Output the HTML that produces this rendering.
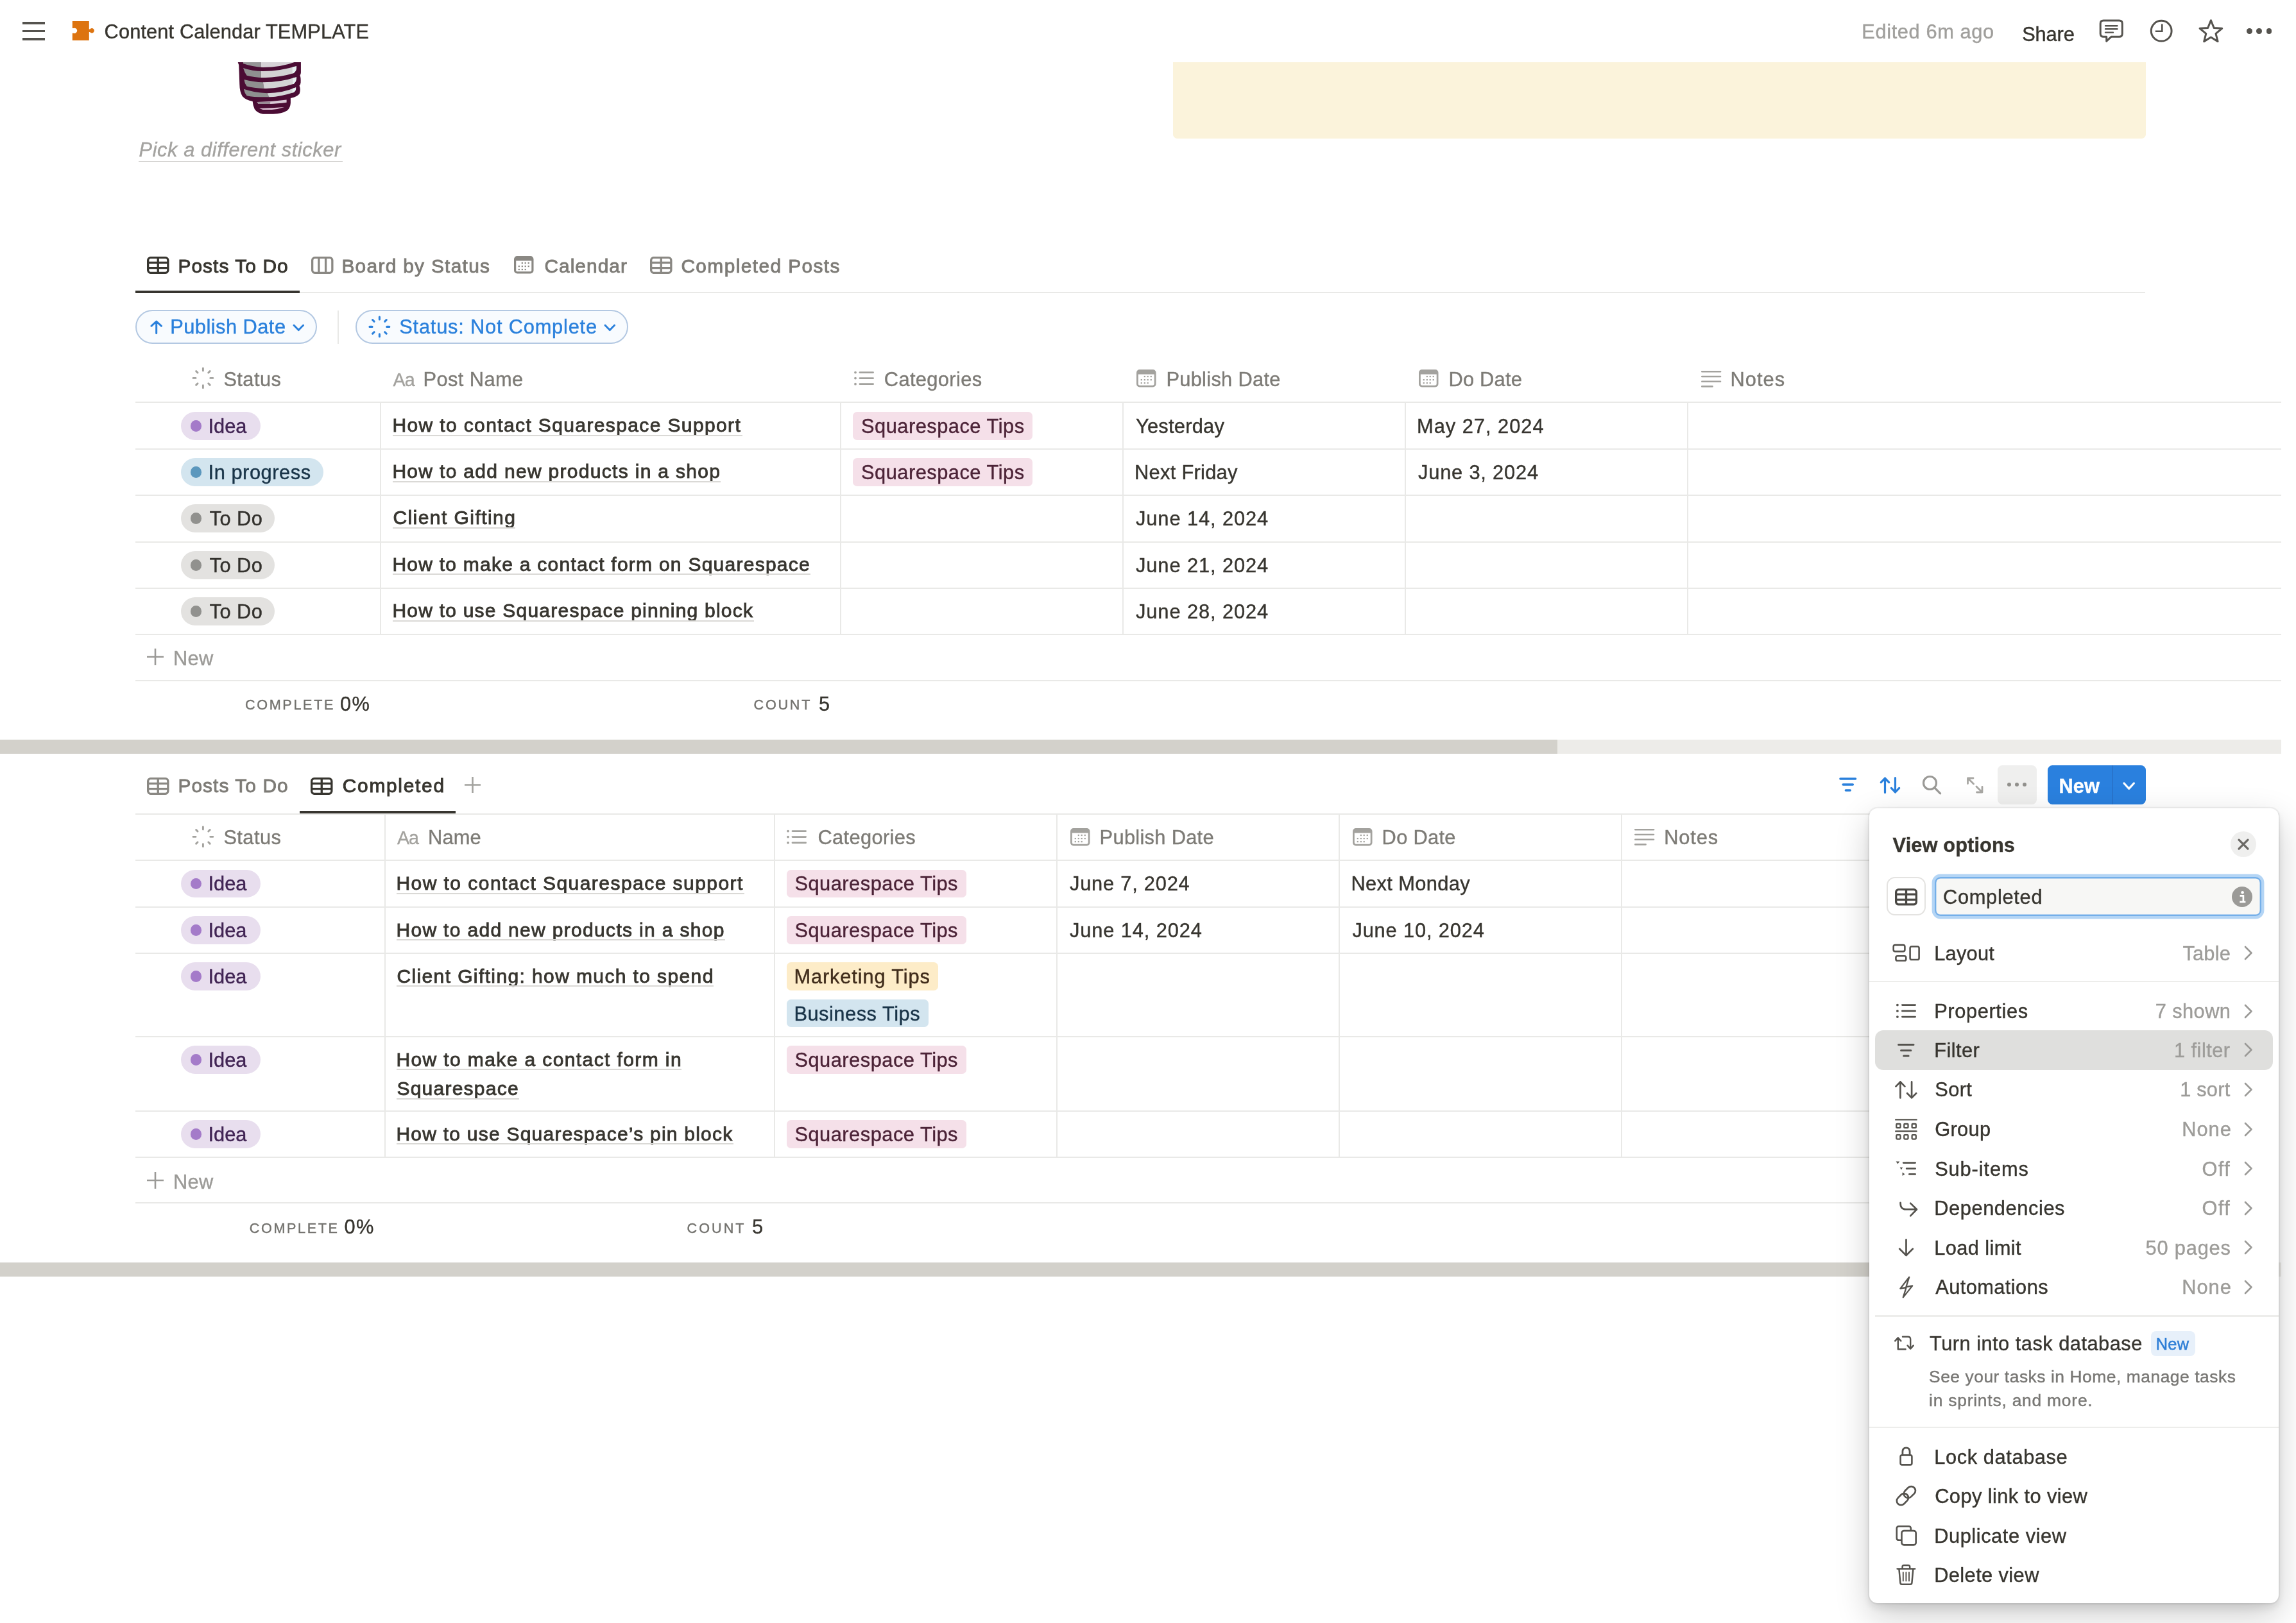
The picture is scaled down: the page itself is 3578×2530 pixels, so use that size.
<!DOCTYPE html>
<html><head><meta charset="utf-8"><title>Content Calendar TEMPLATE</title>
<style>
html,body{margin:0;padding:0;background:#fff;}
body{width:3578px;height:2530px;position:relative;overflow:hidden;font-family:"Liberation Sans",sans-serif;}
#r{position:absolute;left:0;top:0;width:3578px;height:2530px;will-change:transform;}
#r>div,#r>span,#r>svg{position:absolute;}
.t{white-space:pre;line-height:1;display:block;}
svg{overflow:visible;display:block;}
</style></head>
<body><div id="r">
<div style="left:35px;top:34.2px;width:35px;height:3.7px;background:#55534e;"></div>
<div style="left:35px;top:46.8px;width:35px;height:3.7px;background:#55534e;"></div>
<div style="left:35px;top:59.3px;width:35px;height:3.7px;background:#55534e;"></div>
<svg style="left:110px;top:30px;width:40px;height:36px;" viewBox="110 30 40 36"><path fill="#dd7410" d="M112.8 33H138.8V45.6H140.2A3.7 3.7 0 1 1 140.2 50H138.8V63H112.8V51.8H115A4.1 4.1 0 1 0 115 43.9H112.8Z"/></svg>
<span class="t" style="left:162.60px;top:34.93px;font-size:30.8px;color:#37352f;letter-spacing:0.112px;-webkit-text-stroke:0.4px #37352f;">Content Calendar TEMPLATE</span>
<span class="t" style="left:2901.30px;top:34.53px;font-size:30.8px;color:#a09f9c;letter-spacing:0.608px;-webkit-text-stroke:0.4px #a09f9c;">Edited 6m ago</span>
<span class="t" style="left:3151.20px;top:38.93px;font-size:30.8px;color:#37352f;letter-spacing:-0.150px;-webkit-text-stroke:0.4px #37352f;">Share</span>
<svg style="left:3268px;top:27px;width:46px;height:44px;" viewBox="3268 27 46 44"><path d="M3278 32.1H3302.5Q3307.3 32.1 3307.3 36.9V52.5Q3307.3 57.3 3302.5 57.3H3290L3282.7 64.2V57.3H3278Q3273.2 57.3 3273.2 52.5V36.9Q3273.2 32.1 3278 32.1Z" fill="none" stroke="#55534e" stroke-width="3" stroke-linejoin="round"/><path d="M3281 40.2H3299.5M3281 45.2H3299.5M3281 50.6H3293" stroke="#55534e" stroke-width="2.4" stroke-linecap="round"/></svg>
<svg style="left:3346px;top:26px;width:46px;height:46px;" viewBox="3346 26 46 46"><circle cx="3368.2" cy="48.2" r="15.9" fill="none" stroke="#55534e" stroke-width="3"/><path d="M3369.3 37.5V48.8H3358.8" fill="none" stroke="#55534e" stroke-width="2.6"/></svg>
<svg style="left:3422px;top:26px;width:48px;height:46px;" viewBox="3422 26 48 46"><polygon points="3445.40,31.70 3450.10,43.43 3462.71,44.28 3453.01,52.37 3456.10,64.62 3445.40,57.90 3434.70,64.62 3437.79,52.37 3428.09,44.28 3440.70,43.43" fill="none" stroke="#55534e" stroke-width="3" stroke-linejoin="round"/></svg>
<div style="left:3501.2px;top:44px;width:8.8px;height:8.8px;background:#55534e;border-radius:50%;"></div>
<div style="left:3516.4px;top:44px;width:8.8px;height:8.8px;background:#55534e;border-radius:50%;"></div>
<div style="left:3531.6px;top:44px;width:8.8px;height:8.8px;background:#55534e;border-radius:50%;"></div>
<svg style="left:340px;top:90px;width:160px;height:100px;" viewBox="0 0 2296 1435">
<path fill="#4b0c34" d="M440 100H1850V330Q1850 360 1830 400Q1850 440 1845 560Q1840 600 1815 625Q1850 700 1820 800Q1780 870 1620 905V1010Q1615 1120 1540 1185Q1420 1255 1230 1258H1000Q880 1240 815 1150Q775 1060 770 975Q620 950 540 860Q480 760 478 600Q470 350 462 160Z"/>
<clipPath id="c1"><path d="M555 100H1705Q1400 215 1000 215Q760 200 555 128Z"/></clipPath>
<g clip-path="url(#c1)"><rect x="500" y="90" width="455" height="200" fill="#959596"/><rect x="955" y="90" width="800" height="200" fill="#d6d2d6"/></g>
<clipPath id="c2"><path d="M560 228Q760 300 1000 300Q1400 300 1752 185Q1765 290 1690 345Q1400 440 1000 447Q800 440 640 400Q590 330 560 228Z"/></clipPath>
<g clip-path="url(#c2)"><rect x="500" y="150" width="460" height="320" fill="#8f9090"/><rect x="960" y="150" width="740" height="320" fill="#d3d2d3"/><rect x="1660" y="150" width="120" height="320" fill="#e6eff0"/></g>
<clipPath id="c3"><path d="M578 488Q800 545 1000 550Q1400 550 1752 430Q1760 530 1690 585Q1400 680 1040 690Q800 680 640 640Q590 570 578 488Z"/></clipPath>
<g clip-path="url(#c3)"><path d="M500 400H980L1030 720H500Z" fill="#8f9090"/><path d="M980 400H1700V720H1030Z" fill="#d3d4d5"/><rect x="1670" y="400" width="120" height="320" fill="#e6eff0"/></g>
<clipPath id="c4"><path d="M570 700Q800 780 1100 792Q1450 790 1742 660Q1750 740 1690 775Q1400 870 1150 882Q800 890 640 850Q590 790 570 700Z"/></clipPath>
<g clip-path="url(#c4)"><path d="M500 640H1020L1150 900H500Z" fill="#8f9090"/><path d="M1020 640H1700V900H1150Z" fill="#d3d5d6"/><rect x="1660" y="640" width="120" height="260" fill="#e6f1f2"/></g>
<path d="M868 990Q1200 985 1530 940V1000Q1300 1030 1170 1032H900Z" fill="#d9c9d6"/>
<path d="M868 990Q1000 990 1165 985V1032H900Z" fill="#9a8a96"/>
<path d="M920 1132Q1200 1130 1480 1105Q1350 1150 1200 1162H1000Z" fill="#e0c4d8"/>
</svg>
<span class="t" style="left:216.50px;top:219.13px;font-size:30.8px;color:#a4a3a0;letter-spacing:0.587px;font-style:italic;-webkit-text-stroke:0.4px #a4a3a0;">Pick a different sticker</span>
<div style="left:216px;top:250.5px;width:317.5px;height:1.6px;background:#c9c8c5;"></div>
<div style="left:1828px;top:97px;width:1516px;height:118.8px;background:#fbf3db;border-radius:0 0 6.6px 6.6px;"></div>
<div style="left:211px;top:455px;width:3132px;height:2px;background:#e9e9e7;"></div>
<div style="left:211px;top:453px;width:256px;height:4px;background:#37352f;"></div>
<svg style="left:229.3px;top:400.3px;width:34.5px;height:27px;" viewBox="0 0 34.5 27"><g fill="none" stroke="#37352f" stroke-width="3.3"><rect x="1.65" y="1.65" width="31.2" height="23.7" rx="4"/><path d="M17.25 1.65V25.35M1.65 9.3H32.85M1.65 17.7H32.85"/></g></svg>
<span class="t" style="left:277.40px;top:399.71px;font-size:29.876px;color:#37352f;letter-spacing:1.080px;-webkit-text-stroke:0.95px #37352f;">Posts To Do</span>
<svg style="left:484.5px;top:399.8px;width:34.5px;height:27px;" viewBox="0 0 34.5 27"><g fill="none" stroke="#8a8883" stroke-width="3.3"><rect x="1.65" y="1.65" width="31.2" height="23.7" rx="4"/><path d="M11.9 1.65V25.35M22.6 1.65V25.35"/></g></svg>
<span class="t" style="left:532.40px;top:399.71px;font-size:29.876px;color:#7d7b76;letter-spacing:1.300px;-webkit-text-stroke:0.85px #7d7b76;">Board by Status</span>
<svg style="left:801.4px;top:399.3px;width:30.5px;height:27.5px;" viewBox="0 0 30.5 27.5"><rect x="1.6" y="1.6" width="27.3" height="24.3" rx="3.5" fill="none" stroke="#8a8883" stroke-width="3.2"/><path d="M1.6 7.425000000000001H28.9V4.5Q28.9 1.6 26.0 1.6H4.5Q1.6 1.6 1.6 4.5Z" fill="#8a8883"/><rect x="11.71" y="9.90" width="2.2" height="2.2" fill="#8a8883"/><rect x="16.59" y="9.90" width="2.2" height="2.2" fill="#8a8883"/><rect x="21.62" y="9.90" width="2.2" height="2.2" fill="#8a8883"/><rect x="6.68" y="14.99" width="2.2" height="2.2" fill="#8a8883"/><rect x="11.71" y="14.99" width="2.2" height="2.2" fill="#8a8883"/><rect x="16.59" y="14.99" width="2.2" height="2.2" fill="#8a8883"/><rect x="21.62" y="14.99" width="2.2" height="2.2" fill="#8a8883"/><rect x="6.68" y="19.94" width="2.2" height="2.2" fill="#8a8883"/><rect x="11.71" y="19.94" width="2.2" height="2.2" fill="#8a8883"/><rect x="16.59" y="19.94" width="2.2" height="2.2" fill="#8a8883"/></svg>
<span class="t" style="left:848.40px;top:399.71px;font-size:29.876px;color:#7d7b76;letter-spacing:1.057px;-webkit-text-stroke:0.85px #7d7b76;">Calendar</span>
<svg style="left:1013px;top:400.3px;width:34.5px;height:27px;" viewBox="0 0 34.5 27"><g fill="none" stroke="#8a8883" stroke-width="3.3"><rect x="1.65" y="1.65" width="31.2" height="23.7" rx="4"/><path d="M17.25 1.65V25.35M1.65 9.3H32.85M1.65 17.7H32.85"/></g></svg>
<span class="t" style="left:1061.40px;top:399.71px;font-size:29.876px;color:#7d7b76;letter-spacing:1.407px;-webkit-text-stroke:0.85px #7d7b76;">Completed Posts</span>
<div style="left:211.2px;top:483.4px;width:283.2px;height:52.4px;border:2.2px solid #b3c8e2;background:#f8fbfe;border-radius:27px;box-sizing:border-box;"></div>
<svg style="left:233.4px;top:496.8px;width:21.4px;height:25.6px;" viewBox="-10.7 -12.8 21.4 25.6"><path d="M0 9.8V-8.8M-7.7 -1.6000000000000005L0 -8.8L7.7 -1.6000000000000005" stroke="#2a80dc" stroke-width="3" fill="none" stroke-linecap="round" stroke-linejoin="round"/></svg>
<span class="t" style="left:265.20px;top:494.93px;font-size:30.8px;color:#2a80dc;letter-spacing:0.473px;-webkit-text-stroke:0.4px #2a80dc;">Publish Date</span>
<svg style="left:454.9px;top:503.6px;width:20.6px;height:13.6px;" viewBox="-10.3 -6.8 20.6 13.6"><path d="M-7.3 -3.8L0 3.8L7.3 -3.8" stroke="#2a80dc" stroke-width="2.9" fill="none" stroke-linecap="round" stroke-linejoin="round"/></svg>
<div style="left:525.6px;top:483.5px;width:2px;height:52px;background:#e9e9e7;"></div>
<div style="left:554.2px;top:483.4px;width:425.2px;height:52.4px;border:2.2px solid #b3c8e2;background:#f8fbfe;border-radius:27px;box-sizing:border-box;"></div>
<svg style="left:573.5px;top:492.2px;width:34.8px;height:34.8px;" viewBox="-17.4 -17.4 34.8 34.8"><path d="M0.00 -11.40L0.00 -15.40M8.34 -8.34L10.75 -10.75M11.40 0.00L15.40 0.00M8.34 8.34L10.75 10.75M0.00 11.40L0.00 15.40M-8.34 8.34L-10.75 10.75M-11.40 0.00L-15.40 0.00M-8.34 -8.34L-10.75 -10.75" fill="none" stroke="#2a80dc" stroke-width="3.1" stroke-linecap="round"/></svg>
<span class="t" style="left:622.20px;top:494.93px;font-size:30.8px;color:#2a80dc;letter-spacing:0.800px;-webkit-text-stroke:0.4px #2a80dc;">Status: Not Complete</span>
<svg style="left:939.7px;top:503.6px;width:20.6px;height:13.6px;" viewBox="-10.3 -6.8 20.6 13.6"><path d="M-7.3 -3.8L0 3.8L7.3 -3.8" stroke="#2a80dc" stroke-width="2.9" fill="none" stroke-linecap="round" stroke-linejoin="round"/></svg>
<div style="left:211px;top:626px;width:3344px;height:2px;background:#e9e9e7;"></div>
<div style="left:211px;top:699px;width:3344px;height:2px;background:#e9e9e7;"></div>
<div style="left:211px;top:771px;width:3344px;height:2px;background:#e9e9e7;"></div>
<div style="left:211px;top:844px;width:3344px;height:2px;background:#e9e9e7;"></div>
<div style="left:211px;top:916px;width:3344px;height:2px;background:#e9e9e7;"></div>
<div style="left:211px;top:988px;width:3344px;height:2px;background:#e9e9e7;"></div>
<div style="left:211px;top:1060px;width:3344px;height:2px;background:#e9e9e7;"></div>
<div style="left:592px;top:628px;width:2px;height:361px;background:#e9e9e7;"></div>
<div style="left:1309px;top:628px;width:2px;height:361px;background:#e9e9e7;"></div>
<div style="left:1749px;top:628px;width:2px;height:361px;background:#e9e9e7;"></div>
<div style="left:2189px;top:628px;width:2px;height:361px;background:#e9e9e7;"></div>
<div style="left:2629px;top:628px;width:2px;height:361px;background:#e9e9e7;"></div>
<svg style="left:299.1px;top:572.2px;width:34.8px;height:34.8px;" viewBox="-17.4 -17.4 34.8 34.8"><path d="M0.00 -11.40L0.00 -15.40M8.34 -8.34L10.75 -10.75M11.40 0.00L15.40 0.00M8.34 8.34L10.75 10.75M0.00 11.40L0.00 15.40M-8.34 8.34L-10.75 10.75M-11.40 0.00L-15.40 0.00M-8.34 -8.34L-10.75 -10.75" fill="none" stroke="#a3a29e" stroke-width="2.9" stroke-linecap="round"/></svg>
<span class="t" style="left:348.40px;top:576.53px;font-size:30.8px;color:#7d7b76;letter-spacing:0.440px;-webkit-text-stroke:0.4px #7d7b76;">Status</span>
<span class="t" style="left:612.60px;top:578.35px;font-size:28.644px;color:#a3a29e;letter-spacing:-1.000px;-webkit-text-stroke:0.4px #a3a29e;">Aa</span>
<span class="t" style="left:659.60px;top:576.53px;font-size:30.8px;color:#7d7b76;letter-spacing:0.400px;-webkit-text-stroke:0.4px #7d7b76;">Post Name</span>
<svg style="left:1331.2px;top:578px;width:32px;height:24px;" viewBox="0 -1 32 24"><circle cx="2" cy="1.6" r="1.9" fill="#a3a29e"/><path d="M9 1.6H29.6" stroke="#a3a29e" stroke-width="2.8" stroke-linecap="round"/><circle cx="2" cy="10.6" r="1.9" fill="#a3a29e"/><path d="M9 10.6H29.6" stroke="#a3a29e" stroke-width="2.8" stroke-linecap="round"/><circle cx="2" cy="19.7" r="1.9" fill="#a3a29e"/><path d="M9 19.7H29.6" stroke="#a3a29e" stroke-width="2.8" stroke-linecap="round"/></svg>
<span class="t" style="left:1377.80px;top:576.53px;font-size:30.8px;color:#7d7b76;letter-spacing:0.378px;-webkit-text-stroke:0.4px #7d7b76;">Categories</span>
<svg style="left:1771.3px;top:576px;width:30.5px;height:27.5px;" viewBox="0 0 30.5 27.5"><rect x="1.4" y="1.4" width="27.7" height="24.7" rx="3.5" fill="none" stroke="#a3a29e" stroke-width="2.8"/><path d="M1.4 7.425000000000001H29.1V4.5Q29.1 1.4 26.0 1.4H4.5Q1.4 1.4 1.4 4.5Z" fill="#a3a29e"/><rect x="11.71" y="9.90" width="2.2" height="2.2" fill="#a3a29e"/><rect x="16.59" y="9.90" width="2.2" height="2.2" fill="#a3a29e"/><rect x="21.62" y="9.90" width="2.2" height="2.2" fill="#a3a29e"/><rect x="6.68" y="14.99" width="2.2" height="2.2" fill="#a3a29e"/><rect x="11.71" y="14.99" width="2.2" height="2.2" fill="#a3a29e"/><rect x="16.59" y="14.99" width="2.2" height="2.2" fill="#a3a29e"/><rect x="21.62" y="14.99" width="2.2" height="2.2" fill="#a3a29e"/><rect x="6.68" y="19.94" width="2.2" height="2.2" fill="#a3a29e"/><rect x="11.71" y="19.94" width="2.2" height="2.2" fill="#a3a29e"/><rect x="16.59" y="19.94" width="2.2" height="2.2" fill="#a3a29e"/></svg>
<span class="t" style="left:1817.40px;top:576.53px;font-size:30.8px;color:#7d7b76;letter-spacing:0.309px;-webkit-text-stroke:0.4px #7d7b76;">Publish Date</span>
<svg style="left:2211.3px;top:576px;width:30.5px;height:27.5px;" viewBox="0 0 30.5 27.5"><rect x="1.4" y="1.4" width="27.7" height="24.7" rx="3.5" fill="none" stroke="#a3a29e" stroke-width="2.8"/><path d="M1.4 7.425000000000001H29.1V4.5Q29.1 1.4 26.0 1.4H4.5Q1.4 1.4 1.4 4.5Z" fill="#a3a29e"/><rect x="11.71" y="9.90" width="2.2" height="2.2" fill="#a3a29e"/><rect x="16.59" y="9.90" width="2.2" height="2.2" fill="#a3a29e"/><rect x="21.62" y="9.90" width="2.2" height="2.2" fill="#a3a29e"/><rect x="6.68" y="14.99" width="2.2" height="2.2" fill="#a3a29e"/><rect x="11.71" y="14.99" width="2.2" height="2.2" fill="#a3a29e"/><rect x="16.59" y="14.99" width="2.2" height="2.2" fill="#a3a29e"/><rect x="21.62" y="14.99" width="2.2" height="2.2" fill="#a3a29e"/><rect x="6.68" y="19.94" width="2.2" height="2.2" fill="#a3a29e"/><rect x="11.71" y="19.94" width="2.2" height="2.2" fill="#a3a29e"/><rect x="16.59" y="19.94" width="2.2" height="2.2" fill="#a3a29e"/></svg>
<span class="t" style="left:2257.40px;top:576.53px;font-size:30.8px;color:#7d7b76;letter-spacing:0.267px;-webkit-text-stroke:0.4px #7d7b76;">Do Date</span>
<svg style="left:2650.5px;top:577.6px;width:32px;height:26px;" viewBox="0 0 32 26"><path d="M1.3 1.3H30" stroke="#a3a29e" stroke-width="2.6" stroke-linecap="round"/><path d="M1.3 9.0H30" stroke="#a3a29e" stroke-width="2.6" stroke-linecap="round"/><path d="M1.3 16.7H30" stroke="#a3a29e" stroke-width="2.6" stroke-linecap="round"/><path d="M1.3 24.4H17.5" stroke="#a3a29e" stroke-width="2.6" stroke-linecap="round"/></svg>
<span class="t" style="left:2696.60px;top:576.53px;font-size:30.8px;color:#7d7b76;letter-spacing:1.000px;-webkit-text-stroke:0.4px #7d7b76;">Notes</span>
<div style="left:282px;top:642.2px;width:123.5px;height:43.6px;background:#e8deee;border-radius:22px;"></div>
<div style="left:296.8px;top:655.2px;width:17.6px;height:17.6px;background:#a47bc9;border-radius:50%;"></div>
<span class="t" style="left:324.60px;top:649.73px;font-size:30.8px;color:#412454;letter-spacing:-0.067px;-webkit-text-stroke:0.4px #412454;">Idea</span>
<span class="t" style="left:611.40px;top:647.98px;font-size:30.03px;color:#37352f;letter-spacing:1.370px;-webkit-text-stroke:0.85px #37352f;">How to contact Squarespace Support</span>
<div style="left:611.5px;top:678px;width:545px;height:2px;background:#dad9d6;"></div>
<div style="left:1329px;top:642.2px;width:279.5px;height:43.4px;background:#f5e0e9;border-radius:6.6px;"></div>
<span class="t" style="left:1342.00px;top:649.73px;font-size:30.8px;color:#4c2337;letter-spacing:0.500px;-webkit-text-stroke:0.4px #4c2337;">Squarespace Tips</span>
<span class="t" style="left:1770.00px;top:649.93px;font-size:30.8px;color:#37352f;letter-spacing:0.250px;-webkit-text-stroke:0.4px #37352f;">Yesterday</span>
<span class="t" style="left:2208.00px;top:649.93px;font-size:30.8px;color:#37352f;letter-spacing:1.000px;-webkit-text-stroke:0.4px #37352f;">May 27, 2024</span>
<div style="left:282px;top:714.3px;width:221.5px;height:43.6px;background:#d3e5ef;border-radius:22px;"></div>
<div style="left:296.8px;top:727.3px;width:17.6px;height:17.6px;background:#5b97bd;border-radius:50%;"></div>
<span class="t" style="left:324.60px;top:721.83px;font-size:30.8px;color:#183347;letter-spacing:0.540px;-webkit-text-stroke:0.4px #183347;">In progress</span>
<span class="t" style="left:611.40px;top:720.08px;font-size:30.03px;color:#37352f;letter-spacing:1.303px;-webkit-text-stroke:0.85px #37352f;">How to add new products in a shop</span>
<div style="left:611.5px;top:750px;width:511.5px;height:2px;background:#dad9d6;"></div>
<div style="left:1329px;top:714.3px;width:279.5px;height:43.4px;background:#f5e0e9;border-radius:6.6px;"></div>
<span class="t" style="left:1342.00px;top:721.83px;font-size:30.8px;color:#4c2337;letter-spacing:0.500px;-webkit-text-stroke:0.4px #4c2337;">Squarespace Tips</span>
<span class="t" style="left:1768.00px;top:722.03px;font-size:30.8px;color:#37352f;letter-spacing:0.300px;-webkit-text-stroke:0.4px #37352f;">Next Friday</span>
<span class="t" style="left:2210.00px;top:722.03px;font-size:30.8px;color:#37352f;letter-spacing:0.818px;-webkit-text-stroke:0.4px #37352f;">June 3, 2024</span>
<div style="left:282px;top:786.4px;width:145.5px;height:43.6px;background:#e3e2e0;border-radius:22px;"></div>
<div style="left:296.8px;top:799.4px;width:17.6px;height:17.6px;background:#91918e;border-radius:50%;"></div>
<span class="t" style="left:326.60px;top:793.93px;font-size:30.8px;color:#32302c;letter-spacing:0.475px;-webkit-text-stroke:0.4px #32302c;">To Do</span>
<span class="t" style="left:612.40px;top:792.18px;font-size:30.03px;color:#37352f;letter-spacing:1.438px;-webkit-text-stroke:0.85px #37352f;">Client Gifting</span>
<div style="left:611.5px;top:822px;width:191.5px;height:2px;background:#dad9d6;"></div>
<span class="t" style="left:1770.00px;top:794.13px;font-size:30.8px;color:#37352f;letter-spacing:0.917px;-webkit-text-stroke:0.4px #37352f;">June 14, 2024</span>
<div style="left:282px;top:859.1px;width:145.5px;height:43.6px;background:#e3e2e0;border-radius:22px;"></div>
<div style="left:296.8px;top:872.1px;width:17.6px;height:17.6px;background:#91918e;border-radius:50%;"></div>
<span class="t" style="left:326.60px;top:866.63px;font-size:30.8px;color:#32302c;letter-spacing:0.475px;-webkit-text-stroke:0.4px #32302c;">To Do</span>
<span class="t" style="left:611.40px;top:864.88px;font-size:30.03px;color:#37352f;letter-spacing:1.242px;-webkit-text-stroke:0.85px #37352f;">How to make a contact form on Squarespace</span>
<div style="left:611.5px;top:894px;width:651.5px;height:2px;background:#dad9d6;"></div>
<span class="t" style="left:1770.00px;top:866.83px;font-size:30.8px;color:#37352f;letter-spacing:0.917px;-webkit-text-stroke:0.4px #37352f;">June 21, 2024</span>
<div style="left:282px;top:931.2px;width:145.5px;height:43.6px;background:#e3e2e0;border-radius:22px;"></div>
<div style="left:296.8px;top:944.2px;width:17.6px;height:17.6px;background:#91918e;border-radius:50%;"></div>
<span class="t" style="left:326.60px;top:938.73px;font-size:30.8px;color:#32302c;letter-spacing:0.475px;-webkit-text-stroke:0.4px #32302c;">To Do</span>
<span class="t" style="left:611.40px;top:936.98px;font-size:30.03px;color:#37352f;letter-spacing:1.220px;-webkit-text-stroke:0.85px #37352f;">How to use Squarespace pinning block</span>
<div style="left:611.5px;top:967px;width:563.5px;height:2px;background:#dad9d6;"></div>
<span class="t" style="left:1770.00px;top:938.93px;font-size:30.8px;color:#37352f;letter-spacing:0.917px;-webkit-text-stroke:0.4px #37352f;">June 28, 2024</span>
<svg style="left:228.4px;top:1010.4px;width:28px;height:28px;" viewBox="-14 -14 28 28"><path d="M-13 0H13M0 -13V13" stroke="#9b9a97" stroke-width="2.6" fill="none"/></svg>
<span class="t" style="left:270.00px;top:1012.33px;font-size:30.8px;color:#9b9a97;letter-spacing:0.300px;-webkit-text-stroke:0.4px #9b9a97;">New</span>
<span class="t" style="left:382.00px;top:1088.32px;font-size:21.6px;color:#73726e;letter-spacing:2.657px;-webkit-text-stroke:0.4px #73726e;">COMPLETE</span>
<span class="t" style="left:530.00px;top:1082.63px;font-size:30.8px;color:#37352f;letter-spacing:1.400px;-webkit-text-stroke:0.4px #37352f;">0%</span>
<span class="t" style="left:1174.60px;top:1088.32px;font-size:21.6px;color:#73726e;letter-spacing:2.750px;-webkit-text-stroke:0.4px #73726e;">COUNT</span>
<span class="t" style="left:1276.00px;top:1082.63px;font-size:30.8px;color:#37352f;-webkit-text-stroke:0.4px #37352f;">5</span>
<div style="left:0px;top:1153.2px;width:3555px;height:21.8px;background:#edece9;"></div>
<div style="left:0px;top:1153.2px;width:2427px;height:21.8px;background:#d3d1cb;"></div>
<svg style="left:229.3px;top:1211.6px;width:34.5px;height:27px;" viewBox="0 0 34.5 27"><g fill="none" stroke="#8a8883" stroke-width="3.3"><rect x="1.65" y="1.65" width="31.2" height="23.7" rx="4"/><path d="M17.25 1.65V25.35M1.65 9.3H32.85M1.65 17.7H32.85"/></g></svg>
<span class="t" style="left:277.40px;top:1210.21px;font-size:29.876px;color:#7d7b76;letter-spacing:1.080px;-webkit-text-stroke:0.85px #7d7b76;">Posts To Do</span>
<svg style="left:484.3px;top:1211.6px;width:34.5px;height:27px;" viewBox="0 0 34.5 27"><g fill="none" stroke="#37352f" stroke-width="3.3"><rect x="1.65" y="1.65" width="31.2" height="23.7" rx="4"/><path d="M17.25 1.65V25.35M1.65 9.3H32.85M1.65 17.7H32.85"/></g></svg>
<span class="t" style="left:533.80px;top:1210.21px;font-size:29.876px;color:#37352f;letter-spacing:1.725px;-webkit-text-stroke:0.95px #37352f;">Completed</span>
<svg style="left:723px;top:1210px;width:27px;height:27px;" viewBox="-13.5 -13.5 27.0 27.0"><path d="M-12.5 0H12.5M0 -12.5V12.5" stroke="#a3a29e" stroke-width="2.6" fill="none"/></svg>
<div style="left:467px;top:1264px;width:243px;height:4px;background:#37352f;"></div>
<svg style="left:2862px;top:1208px;width:36px;height:30px;" viewBox="2862 1208 36 30"><path d="M2868 1214H2891.5M2872.2 1223H2887.3M2876.4 1232H2883.2" stroke="#2a80dc" stroke-width="3.6" stroke-linecap="round"/></svg>
<svg style="left:2926px;top:1207px;width:40px;height:34px;" viewBox="2926 1207 40 34"><path d="M2937.5 1235.5V1213M2931.3 1219.6L2937.5 1213L2943.7 1219.6M2953.5 1212.5V1235M2947.3 1228.4L2953.5 1235L2959.7 1228.4" fill="none" stroke="#2a80dc" stroke-width="3.2" stroke-linecap="round" stroke-linejoin="round"/></svg>
<svg style="left:2992px;top:1205px;width:38px;height:36px;" viewBox="2992 1205 38 36"><circle cx="3007.5" cy="1220.5" r="10" fill="none" stroke="#9b9a97" stroke-width="3.2"/><path d="M3014.8 1228L3023.6 1236.8" stroke="#9b9a97" stroke-width="3.2" stroke-linecap="round"/></svg>
<svg style="left:3061px;top:1207px;width:34px;height:34px;" viewBox="3061 1207 34 34"><path d="M3066.5 1221.5V1213H3075M3066.8 1213.3L3075.6 1222.1M3089 1226.5V1235H3080.5M3088.7 1234.7L3079.9 1225.9" fill="none" stroke="#a8a7a3" stroke-width="2.8" stroke-linecap="round" stroke-linejoin="round"/></svg>
<div style="left:3112.6px;top:1193.4px;width:61px;height:60.2px;background:#efefee;border-radius:7.5px;"></div>
<div style="left:3128.3px;top:1219.6px;width:6px;height:6px;background:#91908c;border-radius:50%;"></div>
<div style="left:3140.2px;top:1219.6px;width:6px;height:6px;background:#91908c;border-radius:50%;"></div>
<div style="left:3152.1px;top:1219.6px;width:6px;height:6px;background:#91908c;border-radius:50%;"></div>
<div style="left:3191.4px;top:1193.4px;width:152.2px;height:60.2px;background:#2a80de;border-radius:7.5px;"></div>
<div style="left:3291.4px;top:1193.4px;width:1.8px;height:60.2px;background:#2874cc;"></div>
<span class="t" style="left:3208.40px;top:1210.93px;font-size:30.8px;color:#fff;letter-spacing:0.100px;font-weight:700;-webkit-text-stroke:0.4px #fff;">New</span>
<svg style="left:3307.3px;top:1218.2px;width:21.4px;height:14.4px;" viewBox="-10.7 -7.2 21.4 14.4"><path d="M-7.7 -4.2L0 4.2L7.7 -4.2" stroke="#fff" stroke-width="3.2" fill="none" stroke-linecap="round" stroke-linejoin="round"/></svg>
<div style="left:211px;top:1268px;width:3340px;height:2px;background:#e9e9e7;"></div>
<div style="left:211px;top:1340px;width:3340px;height:2px;background:#e9e9e7;"></div>
<div style="left:211px;top:1413px;width:3340px;height:2px;background:#e9e9e7;"></div>
<div style="left:211px;top:1485px;width:3340px;height:2px;background:#e9e9e7;"></div>
<div style="left:211px;top:1615px;width:3340px;height:2px;background:#e9e9e7;"></div>
<div style="left:211px;top:1731px;width:3340px;height:2px;background:#e9e9e7;"></div>
<div style="left:211px;top:1803px;width:3340px;height:2px;background:#e9e9e7;"></div>
<div style="left:211px;top:1874px;width:3340px;height:2px;background:#e9e9e7;"></div>
<div style="left:599px;top:1270px;width:2px;height:534px;background:#e9e9e7;"></div>
<div style="left:1206px;top:1270px;width:2px;height:534px;background:#e9e9e7;"></div>
<div style="left:1646px;top:1270px;width:2px;height:534px;background:#e9e9e7;"></div>
<div style="left:2086px;top:1270px;width:2px;height:534px;background:#e9e9e7;"></div>
<div style="left:2526px;top:1270px;width:2px;height:534px;background:#e9e9e7;"></div>
<svg style="left:299.3px;top:1287.4px;width:34.8px;height:34.8px;" viewBox="-17.4 -17.4 34.8 34.8"><path d="M0.00 -11.40L0.00 -15.40M8.34 -8.34L10.75 -10.75M11.40 0.00L15.40 0.00M8.34 8.34L10.75 10.75M0.00 11.40L0.00 15.40M-8.34 8.34L-10.75 10.75M-11.40 0.00L-15.40 0.00M-8.34 -8.34L-10.75 -10.75" fill="none" stroke="#a3a29e" stroke-width="2.9" stroke-linecap="round"/></svg>
<span class="t" style="left:348.40px;top:1290.63px;font-size:30.8px;color:#7d7b76;letter-spacing:0.440px;-webkit-text-stroke:0.4px #7d7b76;">Status</span>
<span class="t" style="left:619.00px;top:1292.45px;font-size:28.644px;color:#a3a29e;letter-spacing:-1.000px;-webkit-text-stroke:0.4px #a3a29e;">Aa</span>
<span class="t" style="left:667.00px;top:1290.63px;font-size:30.8px;color:#7d7b76;letter-spacing:0.200px;-webkit-text-stroke:0.4px #7d7b76;">Name</span>
<svg style="left:1226.4px;top:1293.2px;width:32px;height:24px;" viewBox="0 -1 32 24"><circle cx="2" cy="1.6" r="1.9" fill="#a3a29e"/><path d="M9 1.6H29.6" stroke="#a3a29e" stroke-width="2.8" stroke-linecap="round"/><circle cx="2" cy="10.6" r="1.9" fill="#a3a29e"/><path d="M9 10.6H29.6" stroke="#a3a29e" stroke-width="2.8" stroke-linecap="round"/><circle cx="2" cy="19.7" r="1.9" fill="#a3a29e"/><path d="M9 19.7H29.6" stroke="#a3a29e" stroke-width="2.8" stroke-linecap="round"/></svg>
<span class="t" style="left:1274.40px;top:1290.63px;font-size:30.8px;color:#7d7b76;letter-spacing:0.378px;-webkit-text-stroke:0.4px #7d7b76;">Categories</span>
<svg style="left:1667.6px;top:1291.2px;width:30.5px;height:27.5px;" viewBox="0 0 30.5 27.5"><rect x="1.4" y="1.4" width="27.7" height="24.7" rx="3.5" fill="none" stroke="#a3a29e" stroke-width="2.8"/><path d="M1.4 7.425000000000001H29.1V4.5Q29.1 1.4 26.0 1.4H4.5Q1.4 1.4 1.4 4.5Z" fill="#a3a29e"/><rect x="11.71" y="9.90" width="2.2" height="2.2" fill="#a3a29e"/><rect x="16.59" y="9.90" width="2.2" height="2.2" fill="#a3a29e"/><rect x="21.62" y="9.90" width="2.2" height="2.2" fill="#a3a29e"/><rect x="6.68" y="14.99" width="2.2" height="2.2" fill="#a3a29e"/><rect x="11.71" y="14.99" width="2.2" height="2.2" fill="#a3a29e"/><rect x="16.59" y="14.99" width="2.2" height="2.2" fill="#a3a29e"/><rect x="21.62" y="14.99" width="2.2" height="2.2" fill="#a3a29e"/><rect x="6.68" y="19.94" width="2.2" height="2.2" fill="#a3a29e"/><rect x="11.71" y="19.94" width="2.2" height="2.2" fill="#a3a29e"/><rect x="16.59" y="19.94" width="2.2" height="2.2" fill="#a3a29e"/></svg>
<span class="t" style="left:1713.60px;top:1290.63px;font-size:30.8px;color:#7d7b76;letter-spacing:0.309px;-webkit-text-stroke:0.4px #7d7b76;">Publish Date</span>
<svg style="left:2107.6px;top:1291.2px;width:30.5px;height:27.5px;" viewBox="0 0 30.5 27.5"><rect x="1.4" y="1.4" width="27.7" height="24.7" rx="3.5" fill="none" stroke="#a3a29e" stroke-width="2.8"/><path d="M1.4 7.425000000000001H29.1V4.5Q29.1 1.4 26.0 1.4H4.5Q1.4 1.4 1.4 4.5Z" fill="#a3a29e"/><rect x="11.71" y="9.90" width="2.2" height="2.2" fill="#a3a29e"/><rect x="16.59" y="9.90" width="2.2" height="2.2" fill="#a3a29e"/><rect x="21.62" y="9.90" width="2.2" height="2.2" fill="#a3a29e"/><rect x="6.68" y="14.99" width="2.2" height="2.2" fill="#a3a29e"/><rect x="11.71" y="14.99" width="2.2" height="2.2" fill="#a3a29e"/><rect x="16.59" y="14.99" width="2.2" height="2.2" fill="#a3a29e"/><rect x="21.62" y="14.99" width="2.2" height="2.2" fill="#a3a29e"/><rect x="6.68" y="19.94" width="2.2" height="2.2" fill="#a3a29e"/><rect x="11.71" y="19.94" width="2.2" height="2.2" fill="#a3a29e"/><rect x="16.59" y="19.94" width="2.2" height="2.2" fill="#a3a29e"/></svg>
<span class="t" style="left:2153.60px;top:1290.63px;font-size:30.8px;color:#7d7b76;letter-spacing:0.300px;-webkit-text-stroke:0.4px #7d7b76;">Do Date</span>
<svg style="left:2546.6px;top:1291.6px;width:32px;height:26px;" viewBox="0 0 32 26"><path d="M1.3 1.3H30" stroke="#a3a29e" stroke-width="2.6" stroke-linecap="round"/><path d="M1.3 9.0H30" stroke="#a3a29e" stroke-width="2.6" stroke-linecap="round"/><path d="M1.3 16.7H30" stroke="#a3a29e" stroke-width="2.6" stroke-linecap="round"/><path d="M1.3 24.4H17.5" stroke="#a3a29e" stroke-width="2.6" stroke-linecap="round"/></svg>
<span class="t" style="left:2593.20px;top:1290.63px;font-size:30.8px;color:#7d7b76;letter-spacing:0.900px;-webkit-text-stroke:0.4px #7d7b76;">Notes</span>
<div style="left:282px;top:1355.6px;width:123.5px;height:43.6px;background:#e8deee;border-radius:22px;"></div>
<div style="left:296.8px;top:1368.6px;width:17.6px;height:17.6px;background:#a47bc9;border-radius:50%;"></div>
<span class="t" style="left:324.60px;top:1363.13px;font-size:30.8px;color:#412454;letter-spacing:-0.067px;-webkit-text-stroke:0.4px #412454;">Idea</span>
<span class="t" style="left:617.40px;top:1361.98px;font-size:30.03px;color:#37352f;letter-spacing:1.448px;-webkit-text-stroke:0.85px #37352f;">How to contact Squarespace support</span>
<div style="left:617.5px;top:1392px;width:542.6px;height:2px;background:#dad9d6;"></div>
<div style="left:1225.6px;top:1355.8px;width:280px;height:43.4px;background:#f5e0e9;border-radius:6.6px;"></div>
<span class="t" style="left:1238.40px;top:1363.33px;font-size:30.8px;color:#4c2337;letter-spacing:0.507px;-webkit-text-stroke:0.4px #4c2337;">Squarespace Tips</span>
<span class="t" style="left:1667.00px;top:1363.13px;font-size:30.8px;color:#37352f;letter-spacing:0.782px;-webkit-text-stroke:0.4px #37352f;">June 7, 2024</span>
<span class="t" style="left:2105.40px;top:1363.13px;font-size:30.8px;color:#37352f;letter-spacing:0.380px;-webkit-text-stroke:0.4px #37352f;">Next Monday</span>
<div style="left:282px;top:1428.2px;width:123.5px;height:43.6px;background:#e8deee;border-radius:22px;"></div>
<div style="left:296.8px;top:1441.2px;width:17.6px;height:17.6px;background:#a47bc9;border-radius:50%;"></div>
<span class="t" style="left:324.60px;top:1435.73px;font-size:30.8px;color:#412454;letter-spacing:-0.067px;-webkit-text-stroke:0.4px #412454;">Idea</span>
<span class="t" style="left:617.40px;top:1434.58px;font-size:30.03px;color:#37352f;letter-spacing:1.319px;-webkit-text-stroke:0.85px #37352f;">How to add new products in a shop</span>
<div style="left:617.5px;top:1464px;width:512px;height:2px;background:#dad9d6;"></div>
<div style="left:1225.6px;top:1428.4px;width:280px;height:43.4px;background:#f5e0e9;border-radius:6.6px;"></div>
<span class="t" style="left:1238.40px;top:1435.93px;font-size:30.8px;color:#4c2337;letter-spacing:0.507px;-webkit-text-stroke:0.4px #4c2337;">Squarespace Tips</span>
<span class="t" style="left:1667.00px;top:1435.73px;font-size:30.8px;color:#37352f;letter-spacing:0.883px;-webkit-text-stroke:0.4px #37352f;">June 14, 2024</span>
<span class="t" style="left:2107.40px;top:1435.73px;font-size:30.8px;color:#37352f;letter-spacing:0.850px;-webkit-text-stroke:0.4px #37352f;">June 10, 2024</span>
<div style="left:282px;top:1500.2px;width:123.5px;height:43.6px;background:#e8deee;border-radius:22px;"></div>
<div style="left:296.8px;top:1513.2px;width:17.6px;height:17.6px;background:#a47bc9;border-radius:50%;"></div>
<span class="t" style="left:324.60px;top:1507.73px;font-size:30.8px;color:#412454;letter-spacing:-0.067px;-webkit-text-stroke:0.4px #412454;">Idea</span>
<span class="t" style="left:618.40px;top:1506.58px;font-size:30.03px;color:#37352f;letter-spacing:1.381px;-webkit-text-stroke:0.85px #37352f;">Client Gifting: how much to spend</span>
<div style="left:617.5px;top:1536px;width:494px;height:2px;background:#dad9d6;"></div>
<div style="left:1225.6px;top:1500.4px;width:236px;height:43.4px;background:#fdecc8;border-radius:6.6px;"></div>
<span class="t" style="left:1237.40px;top:1507.93px;font-size:30.8px;color:#402c1b;letter-spacing:0.862px;-webkit-text-stroke:0.4px #402c1b;">Marketing Tips</span>
<div style="left:1225.6px;top:1558px;width:221px;height:43.4px;background:#d3e5ef;border-radius:6.6px;"></div>
<span class="t" style="left:1237.40px;top:1565.53px;font-size:30.8px;color:#183347;letter-spacing:0.517px;-webkit-text-stroke:0.4px #183347;">Business Tips</span>
<div style="left:282px;top:1630.2px;width:123.5px;height:43.6px;background:#e8deee;border-radius:22px;"></div>
<div style="left:296.8px;top:1643.2px;width:17.6px;height:17.6px;background:#a47bc9;border-radius:50%;"></div>
<span class="t" style="left:324.60px;top:1637.73px;font-size:30.8px;color:#412454;letter-spacing:-0.067px;-webkit-text-stroke:0.4px #412454;">Idea</span>
<span class="t" style="left:617.40px;top:1636.58px;font-size:30.03px;color:#37352f;letter-spacing:1.386px;-webkit-text-stroke:0.85px #37352f;">How to make a contact form in</span>
<div style="left:617.5px;top:1666px;width:444.6px;height:2px;background:#dad9d6;"></div>
<span class="t" style="left:618.40px;top:1682.18px;font-size:30.03px;color:#37352f;letter-spacing:1.240px;-webkit-text-stroke:0.85px #37352f;">Squarespace</span>
<div style="left:617.5px;top:1712px;width:191.2px;height:2px;background:#dad9d6;"></div>
<div style="left:1225.6px;top:1630.4px;width:280px;height:43.4px;background:#f5e0e9;border-radius:6.6px;"></div>
<span class="t" style="left:1238.40px;top:1637.93px;font-size:30.8px;color:#4c2337;letter-spacing:0.507px;-webkit-text-stroke:0.4px #4c2337;">Squarespace Tips</span>
<div style="left:282px;top:1746.2px;width:123.5px;height:43.6px;background:#e8deee;border-radius:22px;"></div>
<div style="left:296.8px;top:1759.2px;width:17.6px;height:17.6px;background:#a47bc9;border-radius:50%;"></div>
<span class="t" style="left:324.60px;top:1753.73px;font-size:30.8px;color:#412454;letter-spacing:-0.067px;-webkit-text-stroke:0.4px #412454;">Idea</span>
<span class="t" style="left:617.40px;top:1752.58px;font-size:30.03px;color:#37352f;letter-spacing:1.230px;-webkit-text-stroke:0.85px #37352f;">How to use Squarespace’s pin block</span>
<div style="left:617.5px;top:1782px;width:525.4px;height:2px;background:#dad9d6;"></div>
<div style="left:1225.6px;top:1746.4px;width:280px;height:43.4px;background:#f5e0e9;border-radius:6.6px;"></div>
<span class="t" style="left:1238.40px;top:1753.93px;font-size:30.8px;color:#4c2337;letter-spacing:0.507px;-webkit-text-stroke:0.4px #4c2337;">Squarespace Tips</span>
<svg style="left:228.4px;top:1825.8px;width:28px;height:28px;" viewBox="-14 -14 28 28"><path d="M-13 0H13M0 -13V13" stroke="#9b9a97" stroke-width="2.6" fill="none"/></svg>
<span class="t" style="left:270.00px;top:1827.73px;font-size:30.8px;color:#9b9a97;letter-spacing:0.300px;-webkit-text-stroke:0.4px #9b9a97;">New</span>
<span class="t" style="left:388.80px;top:1904.12px;font-size:21.6px;color:#73726e;letter-spacing:2.629px;-webkit-text-stroke:0.4px #73726e;">COMPLETE</span>
<span class="t" style="left:536.40px;top:1898.43px;font-size:30.8px;color:#37352f;letter-spacing:1.600px;-webkit-text-stroke:0.4px #37352f;">0%</span>
<span class="t" style="left:1070.60px;top:1904.12px;font-size:21.6px;color:#73726e;letter-spacing:3.050px;-webkit-text-stroke:0.4px #73726e;">COUNT</span>
<span class="t" style="left:1172.00px;top:1898.43px;font-size:30.8px;color:#37352f;-webkit-text-stroke:0.4px #37352f;">5</span>
<div style="left:0px;top:1968px;width:3555px;height:21.6px;background:#edece9;"></div>
<div style="left:0px;top:1968px;width:3551px;height:21.6px;background:#d3d1cb;"></div>
<div style="left:2913.4px;top:1260.4px;width:637.8px;height:1238.5px;background:#fff;border-radius:13px;box-shadow:0 0 0 2.2px rgba(15,15,15,0.05),0 6.6px 13.2px rgba(15,15,15,0.1),0 19.8px 52.8px rgba(15,15,15,0.2);"></div>
<span class="t" style="left:2949.60px;top:1303.33px;font-size:30.8px;color:#37352f;letter-spacing:0.091px;font-weight:700;-webkit-text-stroke:0.4px #37352f;">View options</span>
<div style="left:3476.2px;top:1296.4px;width:39.6px;height:39.6px;background:#efefee;border-radius:50%;"></div>
<svg style="left:3483px;top:1303px;width:26px;height:26px;" viewBox="3483 1303 26 26"><path d="M3489 1309.2L3503 1323.2M3503 1309.2L3489 1323.2" stroke="#6b6965" stroke-width="3.3" stroke-linecap="round"/></svg>
<div style="left:2940px;top:1366.6px;width:60.6px;height:60.8px;background:#fff;border:2.2px solid #e4e3e1;border-radius:13px;box-sizing:border-box;"></div>
<svg style="left:2952.6px;top:1385px;width:35px;height:26.6px;" viewBox="0 0 35 26.6"><g fill="none" stroke="#4a4844" stroke-width="3.3"><rect x="1.65" y="1.65" width="31.7" height="23.3" rx="4"/><path d="M17.5 1.65V24.950000000000003M1.65 9.166666666666668H33.35M1.65 17.433333333333334H33.35"/></g></svg>
<div style="left:3015.4px;top:1367.4px;width:508.4px;height:60.2px;background:#f7f7f5;border-radius:9px;box-shadow:inset 0 0 0 2.4px rgba(35,131,226,0.62),0 0 0 4.4px rgba(35,131,226,0.34);"></div>
<span class="t" style="left:3028.00px;top:1383.93px;font-size:30.8px;color:#37352f;letter-spacing:0.700px;-webkit-text-stroke:0.4px #37352f;">Completed</span>
<div style="left:3477.6px;top:1381.6px;width:32.6px;height:32.6px;background:#9b9a97;border-radius:50%;"></div>
<svg style="left:3477.6px;top:1381.6px;width:32.6px;height:32.6px;" viewBox="0 0 32.6 32.6"><circle cx="16.6" cy="9.3" r="2.3" fill="#fff"/><path d="M12.6 14.4H17.9V23.6M12.3 23.9H21.4" stroke="#fff" stroke-width="2.7" fill="none"/></svg>
<svg style="left:2945px;top:1460px;width:52px;height:52px;" viewBox="2945 1460 52 52"><g fill="none" stroke="#55534e" stroke-width="2.6"><rect x="2950.7" y="1473.1" width="17.7" height="10" rx="2.6"/><rect x="2954.4" y="1490.3" width="15.9" height="7.2" rx="2.6"/><rect x="2976.6" y="1475.5" width="14" height="20.5" rx="2.6"/></g></svg>
<span class="t" style="left:3014.20px;top:1471.53px;font-size:30.8px;color:#37352f;letter-spacing:0.240px;-webkit-text-stroke:0.4px #37352f;">Layout</span>
<span class="t" style="left:3401.40px;top:1471.53px;font-size:30.8px;color:#9d9c99;letter-spacing:0.200px;-webkit-text-stroke:0.4px #9d9c99;">Table</span>
<svg style="left:3495.85px;top:1473.3px;width:15.5px;height:25px;" viewBox="-7.75 -12.5 15.5 25"><path d="M-4.75 -9.5L4.75 0L-4.75 9.5" stroke="#9b9a97" stroke-width="2.6" fill="none" stroke-linecap="round" stroke-linejoin="round"/></svg>
<div style="left:2913.4px;top:1528.9px;width:637.8px;height:2.2px;background:#ededeb;"></div>
<svg style="left:2945px;top:1550px;width:52px;height:52px;" viewBox="2945 1550 52 52"><circle cx="2956.9" cy="1566.6" r="1.9" fill="#55534e"/><path d="M2964.4 1566.6H2984.6" fill="none" stroke="#55534e" stroke-width="2.8" stroke-linecap="round" stroke-linejoin="round" /><circle cx="2956.9" cy="1575.9" r="1.9" fill="#55534e"/><path d="M2964.4 1575.9H2984.6" fill="none" stroke="#55534e" stroke-width="2.8" stroke-linecap="round" stroke-linejoin="round" /><circle cx="2956.9" cy="1585.1" r="1.9" fill="#55534e"/><path d="M2964.4 1585.1H2984.6" fill="none" stroke="#55534e" stroke-width="2.8" stroke-linecap="round" stroke-linejoin="round" /></svg>
<span class="t" style="left:3014.20px;top:1561.73px;font-size:30.8px;color:#37352f;letter-spacing:0.622px;-webkit-text-stroke:0.4px #37352f;">Properties</span>
<span class="t" style="left:3358.80px;top:1561.73px;font-size:30.8px;color:#9d9c99;letter-spacing:0.400px;-webkit-text-stroke:0.4px #9d9c99;">7 shown</span>
<svg style="left:3495.85px;top:1563.5px;width:15.5px;height:25px;" viewBox="-7.75 -12.5 15.5 25"><path d="M-4.75 -9.5L4.75 0L-4.75 9.5" stroke="#9b9a97" stroke-width="2.6" fill="none" stroke-linecap="round" stroke-linejoin="round"/></svg>
<div style="left:2922.2px;top:1606px;width:619.6px;height:61.6px;background:#dfdfdd;border-radius:13px;"></div>
<svg style="left:2945px;top:1612px;width:52px;height:52px;" viewBox="2945 1612 52 52"><path d="M2958.6 1628.5H2982M2962.6 1637.4H2977.8M2966.7 1646.1H2974.1" fill="none" stroke="#55534e" stroke-width="3" stroke-linecap="round" stroke-linejoin="round" /></svg>
<span class="t" style="left:3014.20px;top:1622.53px;font-size:30.8px;color:#37352f;letter-spacing:0.420px;-webkit-text-stroke:0.4px #37352f;">Filter</span>
<span class="t" style="left:3388.00px;top:1622.53px;font-size:30.8px;color:#9d9c99;letter-spacing:0.457px;-webkit-text-stroke:0.4px #9d9c99;">1 filter</span>
<svg style="left:3495.85px;top:1624.3px;width:15.5px;height:25px;" viewBox="-7.75 -12.5 15.5 25"><path d="M-4.75 -9.5L4.75 0L-4.75 9.5" stroke="#9b9a97" stroke-width="2.6" fill="none" stroke-linecap="round" stroke-linejoin="round"/></svg>
<svg style="left:2945px;top:1672px;width:52px;height:52px;" viewBox="2945 1672 52 52"><path d="M2961.4 1711.4V1686.4M2954.4 1693.6L2961.4 1686.4L2968.4 1693.6M2979.1 1686.4V1711.4M2972.1 1704.2L2979.1 1711.4L2986.1 1704.2" fill="none" stroke="#55534e" stroke-width="2.7" stroke-linecap="round" stroke-linejoin="round" /></svg>
<span class="t" style="left:3015.20px;top:1684.13px;font-size:30.8px;color:#37352f;letter-spacing:0.400px;-webkit-text-stroke:0.4px #37352f;">Sort</span>
<span class="t" style="left:3397.20px;top:1684.13px;font-size:30.8px;color:#9d9c99;letter-spacing:0.200px;-webkit-text-stroke:0.4px #9d9c99;">1 sort</span>
<svg style="left:3495.85px;top:1685.9px;width:15.5px;height:25px;" viewBox="-7.75 -12.5 15.5 25"><path d="M-4.75 -9.5L4.75 0L-4.75 9.5" stroke="#9b9a97" stroke-width="2.6" fill="none" stroke-linecap="round" stroke-linejoin="round"/></svg>
<svg style="left:2945px;top:1735px;width:52px;height:52px;" viewBox="2945 1735 52 52"><path d="M2954.2 1745.4H2986.6M2954.2 1763.5H2986.6" fill="none" stroke="#55534e" stroke-width="2.4" stroke-linecap="round" stroke-linejoin="round" /><rect x="2955.3" y="1752" width="6.2" height="6.2" rx="1" fill="none" stroke="#55534e" stroke-width="2.3"/><rect x="2967.3" y="1752" width="6.2" height="6.2" rx="1" fill="none" stroke="#55534e" stroke-width="2.3"/><rect x="2979.6" y="1752" width="6.2" height="6.2" rx="1" fill="none" stroke="#55534e" stroke-width="2.3"/><rect x="2955.3" y="1769.2" width="6.2" height="6.4" rx="1" fill="none" stroke="#55534e" stroke-width="2.3"/><rect x="2967.3" y="1769.2" width="6.2" height="6.4" rx="1" fill="none" stroke="#55534e" stroke-width="2.3"/><rect x="2979.6" y="1769.2" width="6.2" height="6.4" rx="1" fill="none" stroke="#55534e" stroke-width="2.3"/></svg>
<span class="t" style="left:3015.20px;top:1746.13px;font-size:30.8px;color:#37352f;letter-spacing:0.350px;-webkit-text-stroke:0.4px #37352f;">Group</span>
<span class="t" style="left:3400.20px;top:1746.13px;font-size:30.8px;color:#9d9c99;letter-spacing:1.000px;-webkit-text-stroke:0.4px #9d9c99;">None</span>
<svg style="left:3495.85px;top:1747.9px;width:15.5px;height:25px;" viewBox="-7.75 -12.5 15.5 25"><path d="M-4.75 -9.5L4.75 0L-4.75 9.5" stroke="#9b9a97" stroke-width="2.6" fill="none" stroke-linecap="round" stroke-linejoin="round"/></svg>
<svg style="left:2945px;top:1797px;width:52px;height:52px;" viewBox="2945 1797 52 52"><path d="M2966.2 1812.6H2984.6M2971.2 1821.7H2984.6M2975.4 1830.4H2984.6" fill="none" stroke="#55534e" stroke-width="2.8" stroke-linecap="round" stroke-linejoin="round" /><path d="M2954.6 1810.6H2960.2L2957.4 1814.6ZM2960.6 1819.7H2965.2L2962.9 1823.4ZM2964.6 1827.5L2968.4 1830.3L2964.6 1833.1Z" fill="#55534e"/></svg>
<span class="t" style="left:3015.20px;top:1807.53px;font-size:30.8px;color:#37352f;letter-spacing:0.875px;-webkit-text-stroke:0.4px #37352f;">Sub-items</span>
<span class="t" style="left:3431.40px;top:1807.53px;font-size:30.8px;color:#9d9c99;letter-spacing:1.400px;-webkit-text-stroke:0.4px #9d9c99;">Off</span>
<svg style="left:3495.85px;top:1809.3px;width:15.5px;height:25px;" viewBox="-7.75 -12.5 15.5 25"><path d="M-4.75 -9.5L4.75 0L-4.75 9.5" stroke="#9b9a97" stroke-width="2.6" fill="none" stroke-linecap="round" stroke-linejoin="round"/></svg>
<svg style="left:2945px;top:1860px;width:52px;height:52px;" viewBox="2945 1860 52 52"><path d="M2961.6 1874.8Q2961.2 1885.2 2970 1885.2H2986.4M2977.2 1875.6L2987 1885.2L2977.2 1895.4" fill="none" stroke="#55534e" stroke-width="2.7" stroke-linecap="round" stroke-linejoin="round" /></svg>
<span class="t" style="left:3014.20px;top:1869.23px;font-size:30.8px;color:#37352f;letter-spacing:0.582px;-webkit-text-stroke:0.4px #37352f;">Dependencies</span>
<span class="t" style="left:3431.40px;top:1869.23px;font-size:30.8px;color:#9d9c99;letter-spacing:1.400px;-webkit-text-stroke:0.4px #9d9c99;">Off</span>
<svg style="left:3495.85px;top:1871px;width:15.5px;height:25px;" viewBox="-7.75 -12.5 15.5 25"><path d="M-4.75 -9.5L4.75 0L-4.75 9.5" stroke="#9b9a97" stroke-width="2.6" fill="none" stroke-linecap="round" stroke-linejoin="round"/></svg>
<svg style="left:2945px;top:1920px;width:52px;height:52px;" viewBox="2945 1920 52 52"><path d="M2970.5 1932.4V1956.6M2960.2 1946.8L2970.5 1957L2980.8 1946.8" fill="none" stroke="#55534e" stroke-width="2.7" stroke-linecap="round" stroke-linejoin="round" /></svg>
<span class="t" style="left:3014.20px;top:1930.53px;font-size:30.8px;color:#37352f;letter-spacing:0.389px;-webkit-text-stroke:0.4px #37352f;">Load limit</span>
<span class="t" style="left:3343.60px;top:1930.53px;font-size:30.8px;color:#9d9c99;letter-spacing:0.800px;-webkit-text-stroke:0.4px #9d9c99;">50 pages</span>
<svg style="left:3495.85px;top:1932.3px;width:15.5px;height:25px;" viewBox="-7.75 -12.5 15.5 25"><path d="M-4.75 -9.5L4.75 0L-4.75 9.5" stroke="#9b9a97" stroke-width="2.6" fill="none" stroke-linecap="round" stroke-linejoin="round"/></svg>
<svg style="left:2945px;top:1982px;width:52px;height:52px;" viewBox="2945 1982 52 52"><path d="M2975.2 1990.8L2961.4 2008.6L2970.6 2007L2965.8 2022.4L2980.2 2004.4L2970.4 2006Z" fill="none" stroke="#55534e" stroke-width="2.3" stroke-linecap="round" stroke-linejoin="round" /></svg>
<span class="t" style="left:3016.20px;top:1992.23px;font-size:30.8px;color:#37352f;letter-spacing:0.420px;-webkit-text-stroke:0.4px #37352f;">Automations</span>
<span class="t" style="left:3400.20px;top:1992.23px;font-size:30.8px;color:#9d9c99;letter-spacing:1.000px;-webkit-text-stroke:0.4px #9d9c99;">None</span>
<svg style="left:3495.85px;top:1994px;width:15.5px;height:25px;" viewBox="-7.75 -12.5 15.5 25"><path d="M-4.75 -9.5L4.75 0L-4.75 9.5" stroke="#9b9a97" stroke-width="2.6" fill="none" stroke-linecap="round" stroke-linejoin="round"/></svg>
<div style="left:2922.2px;top:2050.4px;width:629px;height:2.2px;background:#ededeb;"></div>
<svg style="left:2945px;top:2070px;width:52px;height:52px;" viewBox="2945 2070 52 52"><path d="M2957.8 2103.2V2085.6M2953.2 2090.4L2957.8 2085.2L2962.4 2090.4M2965 2083.8H2973.2Q2977.2 2083.8 2977.2 2087.8V2101.8M2972.6 2097.4L2977.2 2102.6L2981.8 2097.4M2957.8 2103.2H2969.6" fill="none" stroke="#55534e" stroke-width="2.4" stroke-linecap="round" stroke-linejoin="round" /></svg>
<span class="t" style="left:3007.00px;top:2079.53px;font-size:30.8px;color:#37352f;letter-spacing:0.482px;-webkit-text-stroke:0.4px #37352f;">Turn into task database</span>
<div style="left:3352.4px;top:2075.2px;width:68.4px;height:39.2px;background:#e7f0fa;border-radius:8px;"></div>
<span class="t" style="left:3359.80px;top:2083.10px;font-size:25.4px;color:#2f7fd6;letter-spacing:0.200px;-webkit-text-stroke:0.5px #2f7fd6;">New</span>
<span class="t" style="left:3006.00px;top:2133.45px;font-size:26.4px;color:#787774;letter-spacing:0.537px;-webkit-text-stroke:0.4px #787774;">See your tasks in Home, manage tasks</span>
<span class="t" style="left:3006.00px;top:2170.05px;font-size:26.4px;color:#787774;letter-spacing:0.780px;-webkit-text-stroke:0.4px #787774;">in sprints, and more.</span>
<div style="left:2913.4px;top:2223.7px;width:637.8px;height:2.2px;background:#ededeb;"></div>
<svg style="left:2945px;top:2245px;width:52px;height:52px;" viewBox="2945 2245 52 52"><rect x="2961.6" y="2268.4" width="17.8" height="15" rx="2.4" fill="none" stroke="#55534e" stroke-width="2.6"/><path d="M2964.9 2268.2V2263Q2964.9 2256.8 2970.5 2256.8Q2976.1 2256.8 2976.1 2263V2268.2" fill="none" stroke="#55534e" stroke-width="2.8" stroke-linecap="round" stroke-linejoin="round" /></svg>
<span class="t" style="left:3014.20px;top:2256.53px;font-size:30.8px;color:#37352f;letter-spacing:0.600px;-webkit-text-stroke:0.4px #37352f;">Lock database</span>
<svg style="left:2945px;top:2305px;width:52px;height:52px;" viewBox="2945 2305 52 52"><g transform="rotate(-45 2970.4 2331.6)" fill="none" stroke="#55534e" stroke-width="2.7"><rect x="2952.6" y="2325" width="20" height="13.2" rx="6.6"/><rect x="2968.2" y="2325" width="20" height="13.2" rx="6.6"/></g></svg>
<span class="t" style="left:3015.20px;top:2317.53px;font-size:30.8px;color:#37352f;letter-spacing:0.413px;-webkit-text-stroke:0.4px #37352f;">Copy link to view</span>
<svg style="left:2945px;top:2367px;width:52px;height:52px;" viewBox="2945 2367 52 52"><path d="M2963.4 2400.8H2959.2Q2955.8 2400.8 2955.8 2397.4V2382.6Q2955.8 2379.2 2959.2 2379.2H2974.4Q2977.8 2379.2 2977.8 2382.6V2386" fill="none" stroke="#55534e" stroke-width="2.6"/><rect x="2963.5" y="2386.1" width="22.2" height="22.3" rx="3.6" fill="none" stroke="#55534e" stroke-width="2.6"/></svg>
<span class="t" style="left:3014.20px;top:2379.73px;font-size:30.8px;color:#37352f;letter-spacing:0.554px;-webkit-text-stroke:0.4px #37352f;">Duplicate view</span>
<svg style="left:2945px;top:2430px;width:52px;height:52px;" viewBox="2945 2430 52 52"><path d="M2956.6 2445.4H2984.2M2964.6 2445V2442.4Q2964.6 2440 2967 2440H2973.8Q2976.2 2440 2976.2 2442.4V2445M2959.4 2445.8L2961.4 2467.4Q2961.6 2469.8 2964 2469.8H2976.8Q2979.2 2469.8 2979.4 2467.4L2981.4 2445.8" fill="none" stroke="#55534e" stroke-width="2.5" stroke-linecap="round" stroke-linejoin="round" /><path d="M2965.8 2451V2464.4M2970.4 2451V2464.4M2975 2451V2464.4" fill="none" stroke="#55534e" stroke-width="1.9" stroke-linecap="round" stroke-linejoin="round" /></svg>
<span class="t" style="left:3014.20px;top:2441.03px;font-size:30.8px;color:#37352f;letter-spacing:0.400px;-webkit-text-stroke:0.4px #37352f;">Delete view</span>
</div></body></html>
